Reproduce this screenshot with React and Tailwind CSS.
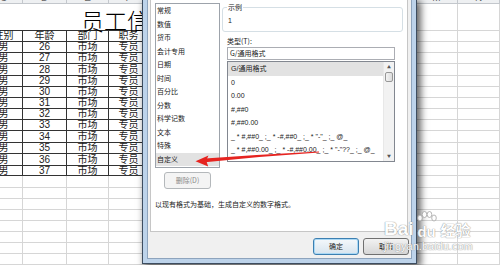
import React from 'react'

const COLS = [
  { w: 'w-[38px]', l: 'C' },
  { w: 'w-[44px]', l: 'D' },
  { w: 'w-[42px]', l: 'E' },
  { w: 'w-[40px]', l: 'F' },
  { w: 'w-[45px]', l: 'G' },
  { w: 'w-[45px]', l: 'H' },
  { w: 'w-[45px]', l: 'I' },
  { w: 'w-[45px]', l: 'J' },
  { w: 'w-[45px]', l: 'K' },
  { w: 'w-[42px]', l: 'L' },
  { w: 'w-[42px]', l: 'M' },
  { w: 'w-[42px]', l: 'N' },
]

const TABLE_H = ['h-[11px]', 'h-[11px]', 'h-[11px]', 'h-[12px]', 'h-[11px]', 'h-[11px]', 'h-[11px]', 'h-[11px]', 'h-[11px]', 'h-[12px]', 'h-[11px]', 'h-[12px]', 'h-[10px]']
const EMPTY_H = ['h-[12px]', 'h-[11px]', 'h-[11px]', 'h-[11px]', 'h-[11px]', 'h-[11px]', 'h-[11px]', 'h-[11px]']

const rows = [
  ['性别', '年龄', '部门', '职务'],
  ...Array.from({ length: 12 }, (_, i) => ['男', String(26 + i), '市场', '专员']),
]

const categories = ['常规', '数值', '货币', '会计专用', '日期', '时间', '百分比', '分数', '科学记数', '文本', '特殊', '自定义']

const formats = [
  'G/通用格式',
  '0',
  '0.00',
  '#,##0',
  '#,##0.00',
  '_ * #,##0_ ;_ * -#,##0_ ;_ * "-"_ ;_ @_',
  '_ * #,##0.00_ ;_ * -#,##0.00_ ;_ * "-"??_ ;_ @_',
]

function Sheet() {
  return (
    <div className="ml-[-15px] w-[515px] font-['Liberation_Sans','Noto_Sans_CJK_SC',sans-serif] text-black">
      {/* column letters, only the bottom edge shows */}
      <div className="flex h-[4px] overflow-hidden bg-[#eef0f2] border-b border-[#c3c7cc]">
        {COLS.map(c => (
          <div key={c.l} className={`${c.w} shrink-0 border-r border-[#c3c7cc] text-center text-[10px] leading-[0px] text-[#666]`}>
            <span className="relative top-[-2px]">{c.l}</span>
          </div>
        ))}
      </div>

      {/* merged title row */}
      <div className="flex h-[27px]">
        <div className="w-[164px] shrink-0 border-b border-[#333] pl-[96px] pt-[4px] whitespace-nowrap font-['Noto_Sans_CJK_SC',sans-serif] text-[23px] font-light leading-[24px]">
          员工信息表
        </div>
        <div className="w-[267px] shrink-0 border-b border-r border-[#d6d6d6]" />
        <div className="w-[42px] shrink-0 border-b border-r border-[#d6d6d6]" />
        <div className="w-[42px] shrink-0 border-b border-r border-[#d6d6d6]" />
      </div>

      {rows.map((r, i) => (
        <div key={i} className={`flex ${TABLE_H[i]}`}>
          {COLS.map((c, j) => (
            <div
              key={c.l}
              className={`${c.w} shrink-0 border-b border-r ${j < 4 ? 'border-[#333]' : 'border-[#d6d6d6]'} flex items-center justify-center whitespace-nowrap text-[10px] leading-none text-[#222]`}
            >
              {j < 4 ? r[j] : ''}
            </div>
          ))}
        </div>
      ))}

      {EMPTY_H.map((h, i) => (
        <div key={i} className={`flex ${h}`}>
          {COLS.map(c => (
            <div key={c.l} className={`${c.w} shrink-0 border-b border-r border-[#d6d6d6]`} />
          ))}
        </div>
      ))}
    </div>
  )
}

function FormatDialog() {
  return (
    <div className="absolute left-[142px] top-0 flex h-[264px] w-[275px] border-x border-b border-[#3d4d60] bg-[#bdd3ea] px-[4px] pb-[4px] shadow-[3px_2px_7px_1px_rgba(0,0,0,0.6)] font-['Noto_Sans_CJK_SC',sans-serif] text-[7px] text-[#222]">
      <div className="flex flex-1 flex-col border-x border-b border-[#8ea4bd] bg-[#f0f0f0]">
        {/* tab page */}
        <div className="ml-[2px] mr-[3px] h-[232px] border-x border-b border-[#c6c6c6] bg-white pl-[4px] pt-[3px]">
          <div className="flex gap-[2px]">
            {/* categories */}
            <div className="w-[65px] shrink-0">
              <div className="h-[165px] border border-[#9da3ab]">
                {categories.map((c, i) => (
                  <div
                    key={c}
                    className={`h-[13.5px] pl-[1px] leading-[13.5px] whitespace-nowrap ${i === categories.length - 1 ? 'bg-[#e2e2e2]' : ''}`}
                  >
                    {c}
                  </div>
                ))}
              </div>
              <div className="ml-[9px] mt-[4px] flex h-[17px] w-[47px] items-center justify-center rounded-[3px] border border-[#b4b8bb] bg-[#f4f4f4] text-[#8a8a8a]">
                删除(D)
              </div>
            </div>

            {/* right side */}
            <div className="w-[181px] shrink-0">
              <div className="relative mt-[4px] h-[25px] rounded-[3px] border border-[#d5dfe5]">
                <span className="absolute left-[4px] top-[-5px] bg-white px-[1px] leading-[9px]">示例</span>
                <div className="pl-[5px] pt-[9px] font-['Liberation_Sans','Noto_Sans_CJK_SC',sans-serif] leading-[8px]">1</div>
              </div>
              <div className="ml-[5px] mt-[5px] leading-[8px]">类型(T):</div>
              <div className="ml-[5px] mt-[2px] h-[13px] w-[168px] border border-[#abadb3] pl-[2px] leading-[11px] whitespace-nowrap">
                G/通用格式
              </div>
              <div className="ml-[5px] mt-[1px] flex h-[101px] w-[168px] border border-[#828790]">
                <div className="flex-1 overflow-hidden font-['Liberation_Sans','Noto_Sans_CJK_SC',sans-serif]">
                  {formats.map((f, i) => (
                    <div
                      key={f}
                      className={`h-[13.5px] pl-[3px] leading-[13.5px] whitespace-nowrap ${i === 0 ? 'bg-[#e2e2e2]' : ''}`}
                    >
                      {f}
                    </div>
                  ))}
                </div>
                <div className="flex w-[11px] shrink-0 flex-col border-l border-[#e8e8e8] bg-[#f2f2f2]">
                  <div className="flex h-[10px] items-center justify-center text-[4px] leading-none text-[#555]">▲</div>
                  <div className="mx-[1px] h-[10px] rounded-[2px] border border-[#979797] bg-gradient-to-r from-[#f3f3f3] to-[#dcdcdc]" />
                  <div className="flex-1" />
                  <div className="flex h-[10px] items-center justify-center text-[4px] leading-none text-[#555]">▼</div>
                </div>
              </div>
            </div>
          </div>

          <div className="mt-[11px] leading-[9px] whitespace-nowrap">以现有格式为基础，生成自定义的数字格式。</div>
        </div>

        {/* buttons */}
        <div className="mt-[6px] flex justify-end gap-[4px] pr-[2px]">
          <div className="flex h-[17px] w-[46px] items-center justify-center rounded-[3px] border border-[#3c7fb1] bg-gradient-to-b from-[#f4f8fb] to-[#d7e4ee] shadow-[inset_0_0_0_1px_#a9d8f5]">
            确定
          </div>
          <div className="flex h-[17px] w-[46px] items-center justify-center rounded-[3px] border border-[#707070] bg-gradient-to-b from-[#f2f2f2] to-[#d6d6d6]">
            取消
          </div>
        </div>
      </div>
    </div>
  )
}

function RedArrow() {
  return (
    <svg className="pointer-events-none absolute left-0 top-0" width="500" height="265" viewBox="0 0 500 265">
      <path d="M205 158.6 Q262 154.2 319 151.4 L319 152.6 Q262 156.4 205 162.2 Z" fill="#e62420" />
      <path d="M195.5 161.2 L208.5 155.6 L206.2 160.6 L208.2 166.4 Z" fill="#e62420" />
    </svg>
  )
}

function Watermark() {
  return (
    <div className="pointer-events-none absolute left-[384px] top-[211px] text-white opacity-90 [text-shadow:0_0_1px_#8c8c8c,0_0_1px_#8c8c8c]">
      <div className="flex items-end">
        <span className="font-['Liberation_Sans',sans-serif] text-[19px] font-bold leading-[19px]">Bai</span>
        <div className="ml-[2px] flex flex-col items-center">
          <svg width="22" height="14" viewBox="0 0 22 14">
            <g fill="#fff" stroke="#9a9a9a" strokeWidth="0.8">
              <ellipse cx="4" cy="7" rx="2.3" ry="3" />
              <ellipse cx="8.5" cy="3.5" rx="2.3" ry="3" />
              <ellipse cx="13.5" cy="3.5" rx="2.3" ry="3" />
              <ellipse cx="18" cy="7" rx="2.3" ry="3" />
            </g>
          </svg>
          <span className="font-['Liberation_Sans',sans-serif] text-[15px] font-bold leading-[13px]">du</span>
        </div>
        <span className="ml-[3px] font-['Noto_Sans_CJK_SC',sans-serif] text-[15px] font-bold leading-[17px]">经验</span>
      </div>
      <div className="mt-[3px] font-['Liberation_Sans',sans-serif] text-[11px] leading-[11px]">jingyan.baidu.com</div>
    </div>
  )
}

export default function App() {
  return (
    <div className="relative h-[265px] w-[500px] overflow-hidden bg-white">
      <Sheet />
      <FormatDialog />
      <RedArrow />
      <Watermark />
    </div>
  )
}
